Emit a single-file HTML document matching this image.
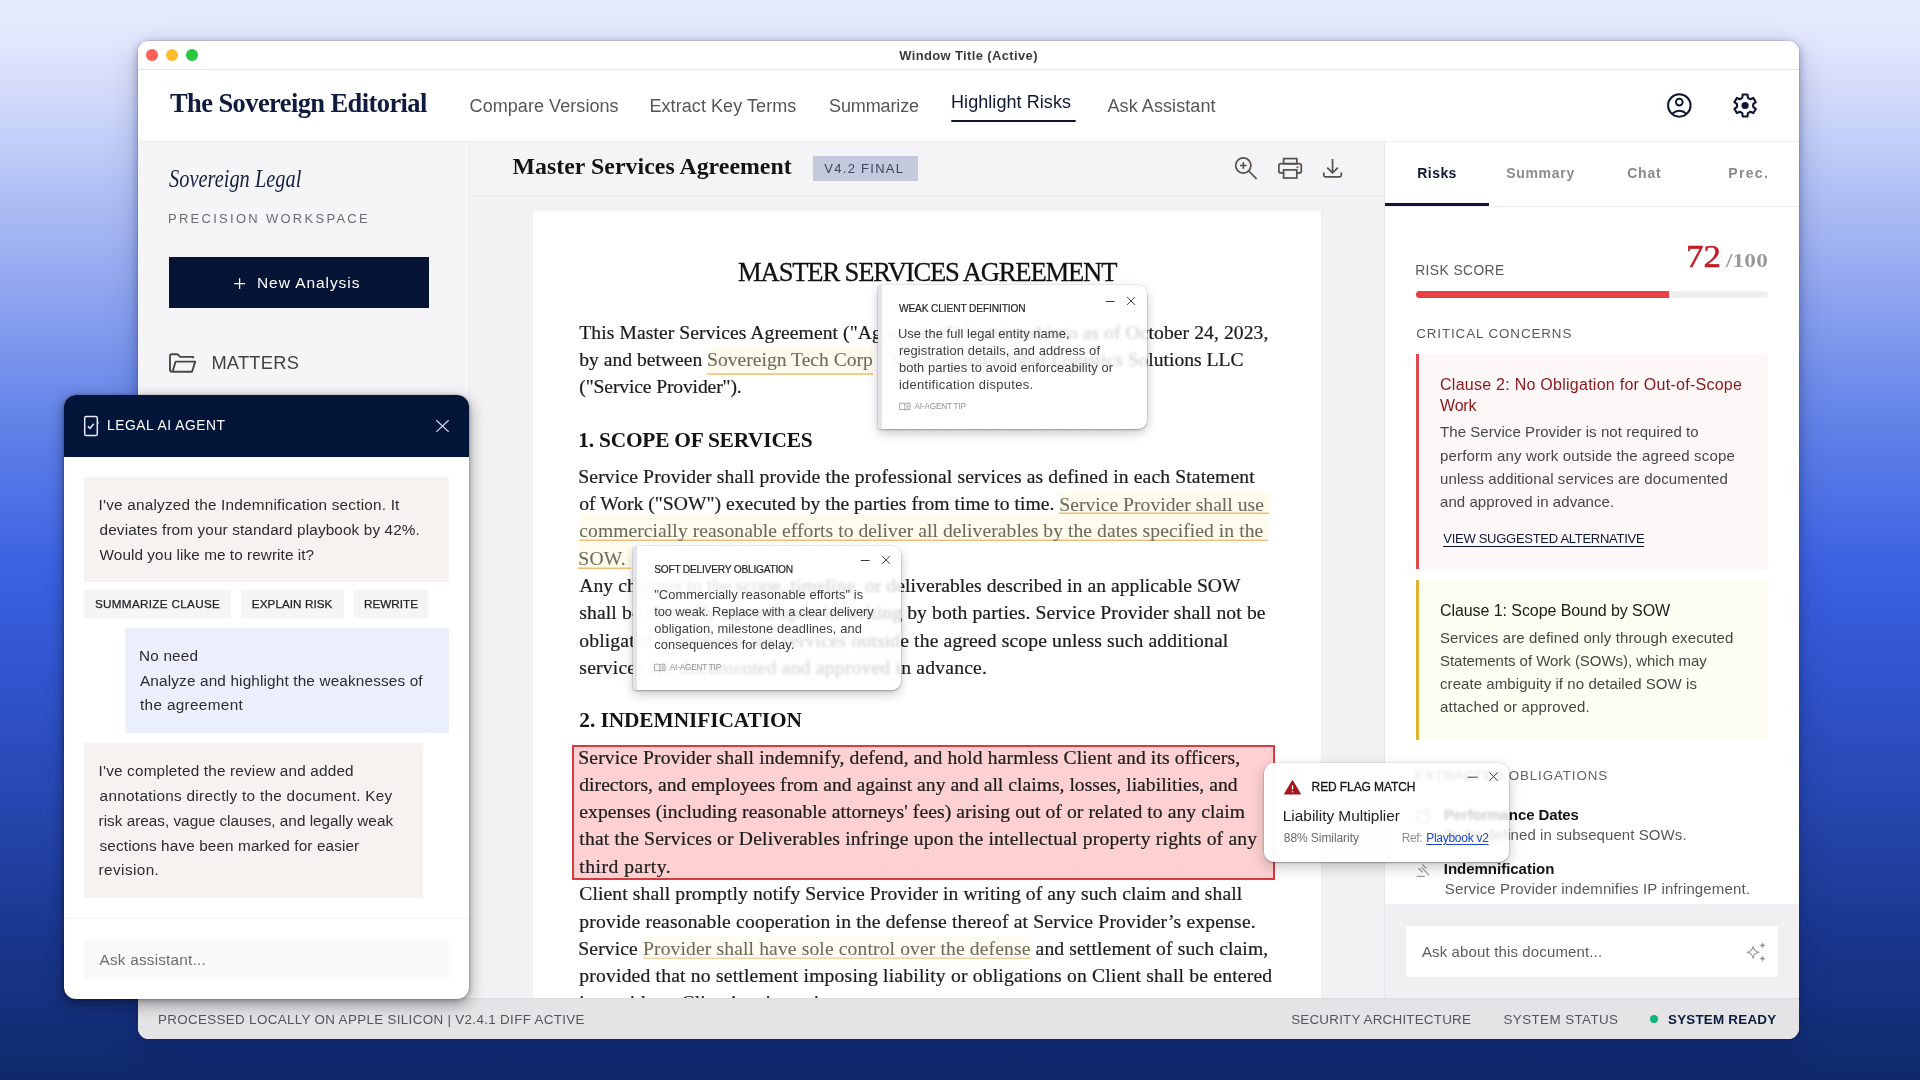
<!DOCTYPE html>
<html lang="en"><head><meta charset="utf-8"><title>The Sovereign Editorial</title>
<style>
*{box-sizing:border-box;margin:0;padding:0}
html,body{width:1920px;height:1080px;overflow:hidden}
body{position:relative;font-family:"Liberation Sans",sans-serif;
 background:linear-gradient(180deg,#e7ebfd 0%,#e1e6fc 4%,#d2dafa 9%,#bccaf7 14.5%,#93a8f0 26%,#6283e8 39%,#3d63e3 52%,#3155cf 62%,#2646ae 75%,#18358a 88%,#10296b 100%);}
a{color:inherit}
#root{position:absolute;left:0;top:0;width:1920px;height:1080px;will-change:transform;transform:translateZ(0)}

</style></head>
<body>
<div id="root">
<!-- p_frame -->
<div style="position:absolute;left:138px;top:41px;width:1661px;height:998px;background:#fff;border-radius:11px;box-shadow:0 0 0 .5px rgba(30,40,100,.20),0 3px 11px rgba(25,35,95,.42),0 12px 34px rgba(10,20,70,.16);"></div>
<div style="position:absolute;left:138px;top:41px;width:1661px;height:29px;background:#fff;border-radius:11px 11px 0 0;border-bottom:1px solid #e2e2e6;"></div>
<div style="position:absolute;left:146px;top:49px;width:12px;height:12px;background:#ff5f57;border-radius:50%;"></div>
<div style="position:absolute;left:166px;top:49px;width:12px;height:12px;background:#febc2e;border-radius:50%;"></div>
<div style="position:absolute;left:186px;top:49px;width:12px;height:12px;background:#28c840;border-radius:50%;"></div>
<div style="position:absolute;left:568.5px;width:800px;text-align:center;top:46.90px;font-family:'Liberation Sans', sans-serif;font-size:13px;font-weight:700;color:#3c3c40;line-height:18px;white-space:nowrap;"><span style="letter-spacing:0.362px;margin-left:0.00px;display:inline-block;">Window Title (Active)</span></div>
<div style="position:absolute;left:138px;top:70px;width:1661px;height:71px;background:#fff;"></div>
<div style="letter-spacing:-0.593px;margin-left:0.00px;position:absolute;left:170px;top:85.16px;font-family:'Liberation Serif', serif;font-size:26.5px;font-weight:700;color:#101c3e;line-height:37px;white-space:nowrap;">The Sovereign Editorial</div>
<div style="letter-spacing:0.062px;margin-left:0.00px;position:absolute;left:469.6px;top:94.26px;font-family:'Liberation Sans', sans-serif;font-size:18px;font-weight:400;color:#55555a;line-height:25px;white-space:nowrap;">Compare Versions</div>
<div style="letter-spacing:0.079px;margin-left:-1.00px;position:absolute;left:650.4px;top:94.26px;font-family:'Liberation Sans', sans-serif;font-size:18px;font-weight:400;color:#55555a;line-height:25px;white-space:nowrap;">Extract Key Terms</div>
<div style="letter-spacing:-0.126px;margin-left:0.00px;position:absolute;left:829px;top:94.26px;font-family:'Liberation Sans', sans-serif;font-size:18px;font-weight:400;color:#55555a;line-height:25px;white-space:nowrap;">Summarize</div>
<div style="letter-spacing:0.069px;margin-left:-1.00px;position:absolute;left:952px;top:90.06px;font-family:'Liberation Sans', sans-serif;font-size:18px;font-weight:400;color:#0c1733;line-height:25px;white-space:nowrap;">Highlight Risks</div>
<div style="position:absolute;left:951px;top:119.7px;width:125px;height:2.7px;background:#0c1733;border-radius:1.4px;"></div>
<div style="letter-spacing:0.080px;margin-left:0.00px;position:absolute;left:1107.5px;top:94.26px;font-family:'Liberation Sans', sans-serif;font-size:18px;font-weight:400;color:#55555a;line-height:25px;white-space:nowrap;">Ask Assistant</div>
<svg style="position:absolute;left:1667px;top:93px;overflow:visible;" width="25" height="25" viewBox="0 0 25 25" fill="none"><circle cx="12.3" cy="12.4" r="11.25" stroke="#0d1734" stroke-width="2"/><circle cx="12.3" cy="9.1" r="3.35" stroke="#0d1734" stroke-width="1.9"/><path d="M5.0 20.7 Q12.3 14.7 19.6 20.7" stroke="#0d1734" stroke-width="1.9"/></svg>
<svg style="position:absolute;left:1733px;top:93px;overflow:visible;" width="25" height="25" viewBox="0 0 25 25" fill="none"><path d="M9.30 4.79 L9.68 1.57 L14.52 1.57 L14.90 4.79 L17.37 6.22 L20.36 4.93 L22.78 9.13 L20.18 11.08 L20.18 13.92 L22.78 15.87 L20.36 20.07 L17.37 18.78 L14.90 20.21 L14.52 23.43 L9.68 23.43 L9.30 20.21 L6.83 18.78 L3.84 20.07 L1.42 15.87 L4.02 13.92 L4.02 11.08 L1.42 9.13 L3.84 4.93 L6.83 6.22Z" stroke="#0d1734" stroke-width="2.1" stroke-linejoin="round"/><circle cx="12.1" cy="12.5" r="3.6" fill="#0d1734"/></svg>
<!-- p_sidebar -->
<div style="position:absolute;left:138px;top:141px;width:331px;height:857px;background:#f5f5f8;border-top:1px solid #efeff3;"></div>
<div style="position:absolute;left:168.6px;top:161.26px;font-family:'Liberation Serif', serif;font-size:25px;font-weight:400;color:#13203f;line-height:35px;white-space:nowrap;font-style:italic;transform:scaleX(.816);transform-origin:0 0;">Sovereign Legal</div>
<div style="letter-spacing:2.278px;margin-left:-1.00px;position:absolute;left:169px;top:209.70px;font-family:'Liberation Sans', sans-serif;font-size:13px;font-weight:400;color:#6c6c70;line-height:18px;white-space:nowrap;">PRECISION WORKSPACE</div>
<div style="position:absolute;left:169px;top:256.8px;width:260px;height:51.5px;background:#061536;"></div>
<svg style="position:absolute;left:233px;top:277px;overflow:visible;" width="13" height="13" viewBox="0 0 13 13" fill="none"><path d="M6.6 1.2 V12 M1.2 6.6 H12" stroke="#fff" stroke-width="1.3"/></svg>
<div style="letter-spacing:0.929px;margin-left:-1.00px;position:absolute;left:258px;top:271.63px;font-family:'Liberation Sans', sans-serif;font-size:15.5px;font-weight:400;color:#fff;line-height:22px;white-space:nowrap;">New Analysis</div>
<svg style="position:absolute;left:168px;top:352px;overflow:visible;" width="29" height="22" viewBox="0 0 29 22" fill="none"><path d="M4.6 19.6 H3.6 Q2 19.6 2 18 V4 Q2 2.3 3.7 2.3 H9.4 L12.2 4.9 H25.3 V6.2" stroke="#4a4643" stroke-width="1.9" stroke-linejoin="round" stroke-linecap="butt"/><path d="M7.6 9.6 H27.2 L24.0 19.7 H4.5 Z" stroke="#4a4643" stroke-width="1.9" stroke-linejoin="round"/></svg>
<div style="letter-spacing:0.251px;margin-left:-1.00px;position:absolute;left:212.4px;top:350.06px;font-family:'Liberation Sans', sans-serif;font-size:18.3px;font-weight:400;color:#45413e;line-height:26px;white-space:nowrap;">MATTERS</div>
<!-- p_doc -->
<div style="position:absolute;left:469px;top:141px;width:916px;height:857px;background:#f2f2f5;border-left:1px solid #ececf0;"></div>
<div style="position:absolute;left:470px;top:141px;width:915px;height:54.5px;background:#f4f4f6;border-bottom:1px solid #e9e9ed;border-top:1px solid #efeff3;"></div>
<div style="letter-spacing:0.051px;margin-left:0.00px;position:absolute;left:512.5px;top:149.87px;font-family:'Liberation Serif', serif;font-size:23.8px;font-weight:700;color:#141414;line-height:33px;white-space:nowrap;">Master Services Agreement</div>
<div style="position:absolute;left:813px;top:156px;width:105px;height:25px;background:#c5c9dd;"></div>
<div style="letter-spacing:1.282px;margin-left:0.00px;position:absolute;left:824.3px;top:159.60px;font-family:'Liberation Sans', sans-serif;font-size:13px;font-weight:400;color:#3b4560;line-height:18px;white-space:nowrap;">V4.2 FINAL</div>
<svg style="position:absolute;left:1234px;top:156px;overflow:visible;" width="24" height="24" viewBox="0 0 24 24" fill="none"><circle cx="9.3" cy="9.5" r="7.6" stroke="#55504e" stroke-width="1.7"/><path d="M9.3 6.2 V12.8 M6.0 9.5 H12.6" stroke="#55504e" stroke-width="1.7"/><path d="M14.8 15.0 L22.6 22.8" stroke="#55504e" stroke-width="1.7" stroke-linecap="butt"/></svg>
<svg style="position:absolute;left:1277px;top:156px;overflow:visible;" width="26" height="24" viewBox="0 0 26 24" fill="none"><rect x="6.6" y="2.6" width="13.2" height="5.2" stroke="#55504e" stroke-width="1.7"/><path d="M6.6 16.9 H3.9 Q1.9 16.9 1.9 14.9 V9.9 Q1.9 7.7 4.1 7.7 H22.1 Q24.3 7.7 24.3 9.9 V14.9 Q24.3 16.9 22.3 16.9 H19.8" stroke="#55504e" stroke-width="1.7"/><rect x="6.6" y="13.9" width="13.2" height="8.1" stroke="#55504e" stroke-width="1.7"/><circle cx="20.5" cy="11.3" r="1.05" fill="#55504e"/></svg>
<svg style="position:absolute;left:1322px;top:157px;overflow:visible;" width="22" height="22" viewBox="0 0 22 22" fill="none"><path d="M10.55 1.9 V15.2 M5.2 10.6 L10.55 15.9 L15.9 10.6" stroke="#55504e" stroke-width="1.7"/><path d="M1.8 15.6 V18.3 Q1.8 19.8 3.3 19.8 H17.8 Q19.3 19.8 19.3 18.3 V15.6" stroke="#55504e" stroke-width="1.7"/></svg>
<div style="position:absolute;left:532.5px;top:211px;width:788.5px;height:800px;background:#fff;box-shadow:0 0 2px rgba(0,0,0,.04);"></div>
<div style="position:absolute;left:527.2px;width:800px;text-align:center;top:254.22px;font-family:'Liberation Serif', serif;font-size:26.6px;font-weight:400;color:#111;line-height:37px;white-space:nowrap;-webkit-text-stroke:.3px #111;"><span style="letter-spacing:-1.161px;margin-left:0.00px;display:inline-block;">MASTER SERVICES AGREEMENT</span></div>
<div style="letter-spacing:0.085px;margin-left:0.00px;position:absolute;left:579.3px;top:319.08px;font-family:'Liberation Serif', serif;font-size:19.6px;font-weight:400;color:#1c1c1c;line-height:27px;white-space:nowrap;-webkit-text-stroke:.22px currentColor;">This Master Services Agreement ("Agreement") is entered into as of October 24, 2023,</div>
<div style="letter-spacing:-0.004px;margin-left:0.00px;position:absolute;left:579.3px;top:346.28px;font-family:'Liberation Serif', serif;font-size:19.6px;font-weight:400;color:#1c1c1c;line-height:27px;white-space:nowrap;-webkit-text-stroke:.22px currentColor;">by and between <span style="background:#fefbee;box-shadow:inset 0 -2px 0 #f5ca8c;padding:1px 0 5px;color:#6c6c5a;-webkit-text-stroke:.08px #6c6c5a">Sovereign Tech Corp</span> ("Client") and Global Logistics Solutions LLC</div>
<div style="letter-spacing:-0.134px;margin-left:0.00px;position:absolute;left:579.3px;top:373.48px;font-family:'Liberation Serif', serif;font-size:19.6px;font-weight:400;color:#1c1c1c;line-height:27px;white-space:nowrap;-webkit-text-stroke:.22px currentColor;">("Service Provider").</div>
<div style="letter-spacing:-0.224px;margin-left:-1.00px;position:absolute;left:579.3px;top:425.08px;font-family:'Liberation Serif', serif;font-size:21.4px;font-weight:700;color:#141414;line-height:30px;white-space:nowrap;">1. SCOPE OF SERVICES</div>
<div style="letter-spacing:0.144px;margin-left:-1.00px;position:absolute;left:579.3px;top:462.88px;font-family:'Liberation Serif', serif;font-size:19.6px;font-weight:400;color:#1c1c1c;line-height:27px;white-space:nowrap;-webkit-text-stroke:.22px currentColor;">Service Provider shall provide the professional services as defined in each Statement</div>
<div style="letter-spacing:0.021px;margin-left:0.00px;position:absolute;left:579.3px;top:490.18px;font-family:'Liberation Serif', serif;font-size:19.6px;font-weight:400;color:#1c1c1c;line-height:27px;white-space:nowrap;-webkit-text-stroke:.22px currentColor;">of Work ("SOW") executed by the parties from time to time. <span style="background:#fffcee;box-shadow:inset 0 -1.6px 0 #f1c078;padding:2.5px 0 0;color:#6c6c5a;-webkit-text-stroke:.08px #6c6c5a">Service Provider shall use&nbsp;</span></div>
<div style="letter-spacing:0.060px;margin-left:0.00px;position:absolute;left:579.3px;top:517.49px;font-family:'Liberation Serif', serif;font-size:19.6px;font-weight:400;color:#1c1c1c;line-height:27px;white-space:nowrap;-webkit-text-stroke:.22px currentColor;"><span style="background:#fffcee;box-shadow:inset 0 -1.6px 0 #f1c078;padding:6px 0 0;color:#6c6c5a;-webkit-text-stroke:.08px #6c6c5a">commercially reasonable efforts to deliver all deliverables by the dates specified in the&nbsp;</span></div>
<div style="letter-spacing:0.220px;margin-left:-1.00px;position:absolute;left:579.3px;top:544.68px;font-family:'Liberation Serif', serif;font-size:19.6px;font-weight:400;color:#1c1c1c;line-height:27px;white-space:nowrap;-webkit-text-stroke:.22px currentColor;"><span style="background:#fffcee;box-shadow:inset 0 -1.6px 0 #f1c078;padding:6px 0 0;color:#6c6c5a;-webkit-text-stroke:.08px #6c6c5a">SOW.&nbsp;</span></div>
<div style="letter-spacing:0.049px;margin-left:0.00px;position:absolute;left:579.3px;top:571.99px;font-family:'Liberation Serif', serif;font-size:19.6px;font-weight:400;color:#1c1c1c;line-height:27px;white-space:nowrap;-webkit-text-stroke:.22px currentColor;">Any changes to the scope, timeline, or deliverables described in an applicable SOW</div>
<div style="letter-spacing:0.127px;margin-left:0.00px;position:absolute;left:579.3px;top:599.28px;font-family:'Liberation Serif', serif;font-size:19.6px;font-weight:400;color:#1c1c1c;line-height:27px;white-space:nowrap;-webkit-text-stroke:.22px currentColor;">shall be mutually agreed upon in writing by both parties. Service Provider shall not be</div>
<div style="letter-spacing:0.147px;margin-left:0.00px;position:absolute;left:579.3px;top:626.58px;font-family:'Liberation Serif', serif;font-size:19.6px;font-weight:400;color:#1c1c1c;line-height:27px;white-space:nowrap;-webkit-text-stroke:.22px currentColor;">obligated to perform any services outside the agreed scope unless such additional</div>
<div style="letter-spacing:0.211px;margin-left:0.00px;position:absolute;left:579.3px;top:653.88px;font-family:'Liberation Serif', serif;font-size:19.6px;font-weight:400;color:#1c1c1c;line-height:27px;white-space:nowrap;-webkit-text-stroke:.22px currentColor;">services are documented and approved in advance.</div>
<div style="letter-spacing:-0.092px;margin-left:0.00px;position:absolute;left:579.3px;top:704.58px;font-family:'Liberation Serif', serif;font-size:21.4px;font-weight:700;color:#141414;line-height:30px;white-space:nowrap;">2. INDEMNIFICATION</div>
<div style="position:absolute;left:571.5px;top:744.5px;width:703.5px;height:135px;background:#fdd0d2;border:2px solid #d93a40;"></div>
<div style="letter-spacing:0.127px;margin-left:-1.00px;position:absolute;left:579.3px;top:743.58px;font-family:'Liberation Serif', serif;font-size:19.6px;font-weight:400;color:#1c1c1c;line-height:27px;white-space:nowrap;-webkit-text-stroke:.22px currentColor;">Service Provider shall indemnify, defend, and hold harmless Client and its officers,</div>
<div style="letter-spacing:0.024px;margin-left:0.00px;position:absolute;left:579.3px;top:770.88px;font-family:'Liberation Serif', serif;font-size:19.6px;font-weight:400;color:#1c1c1c;line-height:27px;white-space:nowrap;-webkit-text-stroke:.22px currentColor;">directors, and employees from and against any and all claims, losses, liabilities, and</div>
<div style="letter-spacing:0.084px;margin-left:0.00px;position:absolute;left:579.3px;top:798.08px;font-family:'Liberation Serif', serif;font-size:19.6px;font-weight:400;color:#1c1c1c;line-height:27px;white-space:nowrap;-webkit-text-stroke:.22px currentColor;">expenses (including reasonable attorneys' fees) arising out of or related to any claim</div>
<div style="letter-spacing:0.188px;margin-left:0.00px;position:absolute;left:579.3px;top:825.28px;font-family:'Liberation Serif', serif;font-size:19.6px;font-weight:400;color:#1c1c1c;line-height:27px;white-space:nowrap;-webkit-text-stroke:.22px currentColor;">that the Services or Deliverables infringe upon the intellectual property rights of any</div>
<div style="letter-spacing:0.510px;margin-left:0.00px;position:absolute;left:579.3px;top:852.58px;font-family:'Liberation Serif', serif;font-size:19.6px;font-weight:400;color:#1c1c1c;line-height:27px;white-space:nowrap;-webkit-text-stroke:.22px currentColor;">third party.</div>
<div style="letter-spacing:0.100px;margin-left:0.00px;position:absolute;left:579.3px;top:880.28px;font-family:'Liberation Serif', serif;font-size:19.6px;font-weight:400;color:#1c1c1c;line-height:27px;white-space:nowrap;-webkit-text-stroke:.22px currentColor;">Client shall promptly notify Service Provider in writing of any such claim and shall</div>
<div style="letter-spacing:0.176px;margin-left:0.00px;position:absolute;left:579.3px;top:907.58px;font-family:'Liberation Serif', serif;font-size:19.6px;font-weight:400;color:#1c1c1c;line-height:27px;white-space:nowrap;-webkit-text-stroke:.22px currentColor;">provide reasonable cooperation in the defense thereof at Service Provider’s expense.</div>
<div style="letter-spacing:0.126px;margin-left:-1.00px;position:absolute;left:579.3px;top:934.78px;font-family:'Liberation Serif', serif;font-size:19.6px;font-weight:400;color:#1c1c1c;line-height:27px;white-space:nowrap;-webkit-text-stroke:.22px currentColor;">Service <span style="background:#fffdf3;box-shadow:inset 0 -1.6px 0 #f0d6a2;padding:2px 0 0;color:#6c6c5a;-webkit-text-stroke:.08px #6c6c5a">Provider shall have sole control over the defense</span> and settlement of such claim,</div>
<div style="letter-spacing:0.195px;margin-left:0.00px;position:absolute;left:579.3px;top:962.08px;font-family:'Liberation Serif', serif;font-size:19.6px;font-weight:400;color:#1c1c1c;line-height:27px;white-space:nowrap;-webkit-text-stroke:.22px currentColor;">provided that no settlement imposing liability or obligations on Client shall be entered</div>
<div style="letter-spacing:0.157px;margin-left:0.00px;position:absolute;left:579.3px;top:989.38px;font-family:'Liberation Serif', serif;font-size:19.6px;font-weight:400;color:#1c1c1c;line-height:27px;white-space:nowrap;-webkit-text-stroke:.22px currentColor;">into without Client’s prior written consent.</div>
<!-- p_right -->
<div style="position:absolute;left:1384px;top:141px;width:415px;height:857px;background:#fff;border-left:1px solid #e8e8ec;border-top:1px solid #efeff3;"></div>
<div style="position:absolute;left:1385px;top:205.5px;width:414px;height:1px;background:#ebebef;"></div>
<div style="letter-spacing:0.432px;margin-left:0.00px;position:absolute;left:1417.3px;top:162.65px;font-family:'Liberation Sans', sans-serif;font-size:14px;font-weight:700;color:#0c1733;line-height:20px;white-space:nowrap;">Risks</div>
<div style="letter-spacing:0.697px;margin-left:0.00px;position:absolute;left:1506.2px;top:163.25px;font-family:'Liberation Sans', sans-serif;font-size:14px;font-weight:700;color:#8a8a8e;line-height:20px;white-space:nowrap;">Summary</div>
<div style="letter-spacing:0.784px;margin-left:0.00px;position:absolute;left:1627.2px;top:163.25px;font-family:'Liberation Sans', sans-serif;font-size:14px;font-weight:700;color:#8a8a8e;line-height:20px;white-space:nowrap;">Chat</div>
<div style="letter-spacing:1.310px;margin-left:0.00px;position:absolute;left:1728.3px;top:163.25px;font-family:'Liberation Sans', sans-serif;font-size:14px;font-weight:700;color:#8a8a8e;line-height:20px;white-space:nowrap;">Prec.</div>
<div style="position:absolute;left:1385px;top:203.2px;width:103.7px;height:3px;background:#0c1733;"></div>
<div style="letter-spacing:0.434px;margin-left:-1.00px;position:absolute;left:1416.2px;top:260.92px;font-family:'Liberation Sans', sans-serif;font-size:13.8px;font-weight:400;color:#58585c;line-height:19px;white-space:nowrap;">RISK SCORE</div>
<div style="position:absolute;left:1686.2px;top:234.20px;font-family:'Liberation Serif', serif;font-size:32px;font-weight:400;color:#c11f25;line-height:45px;white-space:nowrap;-webkit-text-stroke:.55px #c11f25;transform:scaleX(1.09);transform-origin:0 0;">72</div>
<div style="position:absolute;left:1725.6px;top:247.38px;font-family:'Liberation Serif', serif;font-size:19.6px;font-weight:700;color:#9a9a9a;line-height:27px;white-space:nowrap;transform:scaleX(1.19);transform-origin:0 0;letter-spacing:.1px;">/100</div>
<div style="position:absolute;left:1416px;top:290.7px;width:352px;height:7.6px;background:#efefef;border-radius:4px;"></div>
<div style="position:absolute;left:1416px;top:290.7px;width:253.4px;height:7.6px;background:#e93f45;border-radius:4px 0 0 4px;"></div>
<div style="letter-spacing:0.892px;margin-left:0.00px;position:absolute;left:1416.2px;top:324.46px;font-family:'Liberation Sans', sans-serif;font-size:13.4px;font-weight:400;color:#58585c;line-height:19px;white-space:nowrap;">CRITICAL CONCERNS</div>
<div style="position:absolute;left:1416px;top:353.8px;width:352px;height:215.2px;background:#fef7f7;border-left:3px solid #dc4a4e;"></div>
<div style="letter-spacing:0.261px;margin-left:0.00px;position:absolute;left:1440px;top:374.26px;font-family:'Liberation Sans', sans-serif;font-size:16px;font-weight:400;color:#89171a;line-height:22px;white-space:nowrap;">Clause 2: No Obligation for Out-of-Scope</div>
<div style="letter-spacing:-0.180px;margin-left:0.00px;position:absolute;left:1440px;top:394.76px;font-family:'Liberation Sans', sans-serif;font-size:16px;font-weight:400;color:#89171a;line-height:22px;white-space:nowrap;">Work</div>
<div style="letter-spacing:0.071px;margin-left:0.00px;position:absolute;left:1440px;top:421.40px;font-family:'Liberation Sans', sans-serif;font-size:15px;font-weight:400;color:#464648;line-height:21px;white-space:nowrap;">The Service Provider is not required to</div>
<div style="letter-spacing:0.156px;margin-left:0.00px;position:absolute;left:1440px;top:444.70px;font-family:'Liberation Sans', sans-serif;font-size:15px;font-weight:400;color:#464648;line-height:21px;white-space:nowrap;">perform any work outside the agreed scope</div>
<div style="letter-spacing:0.109px;margin-left:0.00px;position:absolute;left:1440px;top:468.10px;font-family:'Liberation Sans', sans-serif;font-size:15px;font-weight:400;color:#464648;line-height:21px;white-space:nowrap;">unless additional services are documented</div>
<div style="letter-spacing:0.067px;margin-left:0.00px;position:absolute;left:1440px;top:491.40px;font-family:'Liberation Sans', sans-serif;font-size:15px;font-weight:400;color:#464648;line-height:21px;white-space:nowrap;">and approved in advance.</div>
<div style="letter-spacing:-0.281px;margin-left:0.00px;position:absolute;left:1443.3px;top:529.90px;font-family:'Liberation Sans', sans-serif;font-size:13px;font-weight:400;color:#0c1733;line-height:18px;white-space:nowrap;border-bottom:1px solid #0c1733;height:15.6px;line-height:15px;margin-top:1.6px;">VIEW SUGGESTED ALTERNATIVE</div>
<div style="position:absolute;left:1416px;top:580px;width:352px;height:159.8px;background:#fefdf1;border-left:3px solid #e2b22e;"></div>
<div style="letter-spacing:-0.075px;margin-left:0.00px;position:absolute;left:1440px;top:599.86px;font-family:'Liberation Sans', sans-serif;font-size:16px;font-weight:400;color:#1b1b1b;line-height:22px;white-space:nowrap;">Clause 1: Scope Bound by SOW</div>
<div style="letter-spacing:0.118px;margin-left:0.00px;position:absolute;left:1440px;top:626.50px;font-family:'Liberation Sans', sans-serif;font-size:15px;font-weight:400;color:#464648;line-height:21px;white-space:nowrap;">Services are defined only through executed</div>
<div style="letter-spacing:-0.038px;margin-left:0.00px;position:absolute;left:1440px;top:649.90px;font-family:'Liberation Sans', sans-serif;font-size:15px;font-weight:400;color:#464648;line-height:21px;white-space:nowrap;">Statements of Work (SOWs), which may</div>
<div style="letter-spacing:0.073px;margin-left:0.00px;position:absolute;left:1440px;top:673.20px;font-family:'Liberation Sans', sans-serif;font-size:15px;font-weight:400;color:#464648;line-height:21px;white-space:nowrap;">create ambiguity if no detailed SOW is</div>
<div style="letter-spacing:0.187px;margin-left:0.00px;position:absolute;left:1440px;top:696.20px;font-family:'Liberation Sans', sans-serif;font-size:15px;font-weight:400;color:#464648;line-height:21px;white-space:nowrap;">attached or approved.</div>
<div style="letter-spacing:0.867px;margin-left:-1.00px;position:absolute;left:1416.2px;top:765.96px;font-family:'Liberation Sans', sans-serif;font-size:13.4px;font-weight:400;color:#636367;line-height:19px;white-space:nowrap;">EXTRACTED OBLIGATIONS</div>
<svg style="position:absolute;left:1416px;top:808px;overflow:visible;" width="15" height="16" viewBox="0 0 15 16" fill="none"><rect x="1.5" y="2.5" width="12" height="12" rx="1.5" stroke="#9a9a9e" stroke-width="1.2"/><path d="M1.5 6 H13.5 M4.5 1 V4 M10.5 1 V4" stroke="#9a9a9e" stroke-width="1.2"/></svg>
<div style="letter-spacing:-0.099px;margin-left:-1.00px;position:absolute;left:1444.8px;top:803.70px;font-family:'Liberation Sans', sans-serif;font-size:15px;font-weight:700;color:#141414;line-height:21px;white-space:nowrap;">Performance Dates</div>
<div style="letter-spacing:0.077px;margin-left:0.00px;position:absolute;left:1444.8px;top:824.10px;font-family:'Liberation Sans', sans-serif;font-size:15px;font-weight:400;color:#58585c;line-height:21px;white-space:nowrap;">To be defined in subsequent SOWs.</div>
<svg style="position:absolute;left:1415.5px;top:862.5px;overflow:visible;" width="15" height="15" viewBox="0 0 15 15" fill="none"><path d="M6.2 1.4 L10.4 5.6 M2.4 5.2 L6.6 9.4 M5.4 4.4 L13.4 12.4 M0.8 13.4 H8.8" stroke="#9a9a9e" stroke-width="1.25"/></svg>
<div style="letter-spacing:-0.020px;margin-left:-1.00px;position:absolute;left:1444.8px;top:857.60px;font-family:'Liberation Sans', sans-serif;font-size:15px;font-weight:700;color:#141414;line-height:21px;white-space:nowrap;">Indemnification</div>
<div style="letter-spacing:0.138px;margin-left:0.00px;position:absolute;left:1444.8px;top:877.60px;font-family:'Liberation Sans', sans-serif;font-size:15px;font-weight:400;color:#58585c;line-height:21px;white-space:nowrap;">Service Provider indemnifies IP infringement.</div>
<div style="position:absolute;left:1385px;top:904px;width:414px;height:94px;background:#f0f0f3;"></div>
<div style="position:absolute;left:1406px;top:926.2px;width:372px;height:50.8px;background:#fff;"></div>
<div style="letter-spacing:0.136px;margin-left:0.00px;position:absolute;left:1421.9px;top:941.30px;font-family:'Liberation Sans', sans-serif;font-size:15px;font-weight:400;color:#5c5c62;line-height:21px;white-space:nowrap;">Ask about this document...</div>
<svg style="position:absolute;left:1746px;top:941px;overflow:visible;" width="22" height="22" viewBox="0 0 22 22" fill="none"><path d="M7.1 5.3 Q8.0 10.4 13.1 11.3 Q8.0 12.2 7.1 17.3 Q6.2 12.2 1.1 11.3 Q6.2 10.4 7.1 5.3Z" stroke="#9a9a9e" stroke-width="1.1" stroke-linejoin="round"/><path d="M16.5 1.7 Q16.9 4.0 19.2 4.4 Q16.9 4.8 16.5 7.1 Q16.1 4.8 13.8 4.4 Q16.1 4.0 16.5 1.7Z" fill="#9a9a9e" stroke="#9a9a9e" stroke-width=".4"/><path d="M16.5 15.0 Q16.9 17.3 19.2 17.7 Q16.9 18.1 16.5 20.4 Q16.1 18.1 13.8 17.7 Q16.1 17.3 16.5 15.0Z" fill="#9a9a9e" stroke="#9a9a9e" stroke-width=".4"/></svg>
<!-- p_status -->
<div style="position:absolute;left:138px;top:998px;width:1661px;height:41px;background:#e4e4e7;border-radius:0 0 11px 11px;border-top:1px solid #dcdce0;"></div>
<div style="letter-spacing:0.332px;margin-left:-1.00px;position:absolute;left:159px;top:1009.56px;font-family:'Liberation Sans', sans-serif;font-size:13.4px;font-weight:400;color:#55555a;line-height:19px;white-space:nowrap;">PROCESSED LOCALLY ON APPLE SILICON | V2.4.1 DIFF ACTIVE</div>
<div style="letter-spacing:0.216px;margin-left:0.00px;position:absolute;left:1291.2px;top:1009.56px;font-family:'Liberation Sans', sans-serif;font-size:13.4px;font-weight:400;color:#55555a;line-height:19px;white-space:nowrap;">SECURITY ARCHITECTURE</div>
<div style="letter-spacing:0.410px;margin-left:0.00px;position:absolute;left:1503.5px;top:1009.56px;font-family:'Liberation Sans', sans-serif;font-size:13.4px;font-weight:400;color:#55555a;line-height:19px;white-space:nowrap;">SYSTEM STATUS</div>
<div style="position:absolute;left:1649.9px;top:1015.3px;width:8px;height:8px;background:#12b37f;border-radius:50%;"></div>
<div style="letter-spacing:0.225px;margin-left:0.00px;position:absolute;left:1668px;top:1009.56px;font-family:'Liberation Sans', sans-serif;font-size:13.4px;font-weight:700;color:#0c1a3e;line-height:19px;white-space:nowrap;">SYSTEM READY</div>
<!-- p_popups -->
<div style="position:absolute;left:877.5px;top:284.7px;width:269.6px;height:144.3px;background:linear-gradient(90deg,rgba(255,255,255,.97) 0%,rgba(255,255,255,.87) 22%,rgba(255,255,255,.81) 55%,rgba(255,255,255,.79) 100%);border-left:4px solid #e3e3e9;border-radius:3px 9px 9px 3px;-webkit-backdrop-filter:blur(1.7px);backdrop-filter:blur(1.7px);box-shadow:0 0 0 .5px rgba(0,0,0,.10),0 1px 2px rgba(0,0,0,.25),0 4px 11px rgba(0,0,0,.22);"></div>
<div style="letter-spacing:-0.127px;margin-left:0.00px;position:absolute;left:898.9px;top:302.07px;font-family:'Liberation Sans', sans-serif;font-size:10.2px;font-weight:400;color:#26262a;line-height:14px;white-space:nowrap;-webkit-text-stroke:.2px #26262a;">WEAK CLIENT DEFINITION</div>
<svg style="position:absolute;left:1103.5px;top:294.9px;overflow:visible;" width="36" height="14" viewBox="0 0 36 14" fill="none"><path d="M1.8 6.5 H10.6" stroke="#3a3a3e" stroke-width="1"/><path d="M23.0 1.9 L31.0 9.9 M31.0 1.9 L23.0 9.9" stroke="#3a3a3e" stroke-width="1"/></svg>
<div style="letter-spacing:0.083px;margin-left:-1.00px;position:absolute;left:898.9px;top:325.03px;font-family:'Liberation Sans', sans-serif;font-size:12.9px;font-weight:400;color:#3c3c42;line-height:18px;white-space:nowrap;">Use the full legal entity name,</div>
<div style="letter-spacing:0.115px;margin-left:0.00px;position:absolute;left:898.9px;top:341.88px;font-family:'Liberation Sans', sans-serif;font-size:12.9px;font-weight:400;color:#3c3c42;line-height:18px;white-space:nowrap;">registration details, and address of</div>
<div style="letter-spacing:0.093px;margin-left:0.00px;position:absolute;left:898.9px;top:358.73px;font-family:'Liberation Sans', sans-serif;font-size:12.9px;font-weight:400;color:#3c3c42;line-height:18px;white-space:nowrap;">both parties to avoid enforceability or</div>
<div style="letter-spacing:0.315px;margin-left:0.00px;position:absolute;left:898.9px;top:375.58px;font-family:'Liberation Sans', sans-serif;font-size:12.9px;font-weight:400;color:#3c3c42;line-height:18px;white-space:nowrap;">identification disputes.</div>
<svg style="position:absolute;left:898.7px;top:402.1px;overflow:visible;" width="12" height="9" viewBox="0 0 12 9" fill="none"><path d="M5.8 1.6 V8.0 M.6 1.2 H4.3 Q5.8 1.2 5.8 2.2 Q5.8 1.2 7.3 1.2 H11 V7.6 H7.3 Q5.8 7.6 5.8 8.3 Q5.8 7.6 4.3 7.6 H.6Z M7.6 3.1 H9.6 M7.6 4.6 H9.6 M7.6 6.1 H9.6" stroke="#909096" stroke-width=".8"/></svg>
<div style="letter-spacing:-0.183px;margin-left:0.00px;position:absolute;left:914.5px;top:401.46px;font-family:'Liberation Sans', sans-serif;font-size:8.2px;font-weight:400;color:#909096;line-height:11px;white-space:nowrap;">AI-AGENT TIP</div>
<div style="position:absolute;left:632.8px;top:545.6px;width:268.2px;height:144.7px;background:linear-gradient(90deg,rgba(255,255,255,.97) 0%,rgba(255,255,255,.87) 22%,rgba(255,255,255,.81) 55%,rgba(255,255,255,.79) 100%);border-left:4px solid #e3e3e9;border-radius:3px 9px 9px 3px;-webkit-backdrop-filter:blur(1.7px);backdrop-filter:blur(1.7px);box-shadow:0 0 0 .5px rgba(0,0,0,.10),0 1px 2px rgba(0,0,0,.25),0 4px 11px rgba(0,0,0,.22);"></div>
<div style="letter-spacing:-0.226px;margin-left:0.00px;position:absolute;left:654.1999999999999px;top:562.97px;font-family:'Liberation Sans', sans-serif;font-size:10.2px;font-weight:400;color:#26262a;line-height:14px;white-space:nowrap;-webkit-text-stroke:.2px #26262a;">SOFT DELIVERY OBLIGATION</div>
<svg style="position:absolute;left:858.8px;top:553.6px;overflow:visible;" width="36" height="14" viewBox="0 0 36 14" fill="none"><path d="M1.8 6.5 H10.6" stroke="#3a3a3e" stroke-width="1"/><path d="M23.0 1.9 L31.0 9.9 M31.0 1.9 L23.0 9.9" stroke="#3a3a3e" stroke-width="1"/></svg>
<div style="letter-spacing:0.066px;margin-left:0.00px;position:absolute;left:654.1999999999999px;top:585.93px;font-family:'Liberation Sans', sans-serif;font-size:12.9px;font-weight:400;color:#3c3c42;line-height:18px;white-space:nowrap;">"Commercially reasonable efforts" is</div>
<div style="letter-spacing:-0.089px;margin-left:0.00px;position:absolute;left:654.1999999999999px;top:602.78px;font-family:'Liberation Sans', sans-serif;font-size:12.9px;font-weight:400;color:#3c3c42;line-height:18px;white-space:nowrap;">too weak. Replace with a clear delivery</div>
<div style="letter-spacing:0.077px;margin-left:0.00px;position:absolute;left:654.1999999999999px;top:619.63px;font-family:'Liberation Sans', sans-serif;font-size:12.9px;font-weight:400;color:#3c3c42;line-height:18px;white-space:nowrap;">obligation, milestone deadlines, and</div>
<div style="letter-spacing:0.059px;margin-left:0.00px;position:absolute;left:654.1999999999999px;top:636.48px;font-family:'Liberation Sans', sans-serif;font-size:12.9px;font-weight:400;color:#3c3c42;line-height:18px;white-space:nowrap;">consequences for delay.</div>
<svg style="position:absolute;left:654.0px;top:663.0px;overflow:visible;" width="12" height="9" viewBox="0 0 12 9" fill="none"><path d="M5.8 1.6 V8.0 M.6 1.2 H4.3 Q5.8 1.2 5.8 2.2 Q5.8 1.2 7.3 1.2 H11 V7.6 H7.3 Q5.8 7.6 5.8 8.3 Q5.8 7.6 4.3 7.6 H.6Z M7.6 3.1 H9.6 M7.6 4.6 H9.6 M7.6 6.1 H9.6" stroke="#909096" stroke-width=".8"/></svg>
<div style="letter-spacing:-0.183px;margin-left:0.00px;position:absolute;left:669.8px;top:662.36px;font-family:'Liberation Sans', sans-serif;font-size:8.2px;font-weight:400;color:#909096;line-height:11px;white-space:nowrap;">AI-AGENT TIP</div>
<div style="position:absolute;left:1263.8px;top:762.9px;width:245.4px;height:98.8px;background:linear-gradient(90deg,rgba(255,255,255,.97) 0%,rgba(255,255,255,.88) 45%,rgba(255,255,255,.80) 75%,rgba(255,255,255,.78) 100%);border-radius:10px;-webkit-backdrop-filter:blur(1.7px);backdrop-filter:blur(1.7px);box-shadow:0 0 0 .5px rgba(0,0,0,.12),0 1px 2px rgba(0,0,0,.28),0 5px 14px rgba(0,0,0,.22);"></div>
<svg style="position:absolute;left:1283px;top:777.6px;overflow:visible;" width="20" height="18" viewBox="0 0 20 18" fill="none"><path d="M9.5 2.8 L17.2 15.9 H1.8 Z" fill="#a3161b" stroke="#a3161b" stroke-width="1.2" stroke-linejoin="round"/><path d="M9.5 7.4 V11.5" stroke="#fff" stroke-width="1.35"/><circle cx="9.5" cy="13.7" r=".8" fill="#fff"/></svg>
<div style="letter-spacing:-0.104px;margin-left:0.00px;position:absolute;left:1311.6px;top:778.84px;font-family:'Liberation Sans', sans-serif;font-size:12px;font-weight:400;color:#161618;line-height:17px;white-space:nowrap;-webkit-text-stroke:.3px #161618;">RED FLAG MATCH</div>
<svg style="position:absolute;left:1466px;top:770px;overflow:visible;" width="36" height="14" viewBox="0 0 36 14" fill="none"><path d="M1.7 7.2 H11.7" stroke="#3a3a3e" stroke-width="1"/><path d="M23.3 2.4 L31.7 10.8 M31.7 2.4 L23.3 10.8" stroke="#3a3a3e" stroke-width="1"/></svg>
<div style="letter-spacing:-0.003px;margin-left:-1.00px;position:absolute;left:1283.8px;top:804.76px;font-family:'Liberation Sans', sans-serif;font-size:15.4px;font-weight:400;color:#222226;line-height:22px;white-space:nowrap;">Liability Multiplier</div>
<div style="letter-spacing:-0.071px;margin-left:0.00px;position:absolute;left:1283.8px;top:829.54px;font-family:'Liberation Sans', sans-serif;font-size:12px;font-weight:400;color:#6a6a70;line-height:17px;white-space:nowrap;">88% Similarity</div>
<div style="letter-spacing:-0.391px;margin-left:0.00px;position:absolute;left:1401.8px;top:829.54px;font-family:'Liberation Sans', sans-serif;font-size:12px;font-weight:400;color:#8a8a90;line-height:17px;white-space:nowrap;">Ref:</div>
<div style="letter-spacing:-0.270px;margin-left:0.00px;position:absolute;left:1426.2px;top:829.54px;font-family:'Liberation Sans', sans-serif;font-size:12px;font-weight:400;color:#1c46c8;line-height:17px;white-space:nowrap;text-decoration:underline;text-underline-offset:2px;text-decoration-thickness:1px;">Playbook v2</div>
<!-- p_agent -->
<div style="position:absolute;left:64px;top:395px;width:405.3px;height:604px;background:#fff;border-radius:12px;box-shadow:0 0 0 .5px rgba(0,0,0,.10),0 1px 4px rgba(0,0,0,.28),0 5px 16px rgba(0,0,0,.40);"></div>
<div style="position:absolute;left:64px;top:395px;width:405.3px;height:61.6px;background:#03163a;border-radius:12px 12px 0 0;"></div>
<svg style="position:absolute;left:83px;top:414.5px;overflow:visible;" width="17" height="23" viewBox="0 0 17 23" fill="none"><rect x="1.7" y="1.6" width="12.6" height="19" rx="1.6" stroke="#e9eaff" stroke-width="1.5"/><path d="M4.9 11.3 L7.0 13.3 L10.8 8.7" stroke="#e9eaff" stroke-width="1.5"/><path d="M14.9 6.2 V9.0" stroke="#e9eaff" stroke-width="1.1"/></svg>
<div style="letter-spacing:0.563px;margin-left:-1.00px;position:absolute;left:108px;top:415.92px;font-family:'Liberation Sans', sans-serif;font-size:13.8px;font-weight:400;color:#fff;line-height:19px;white-space:nowrap;">LEGAL AI AGENT</div>
<svg style="position:absolute;left:435px;top:419px;overflow:visible;" width="16" height="15" viewBox="0 0 16 15" fill="none"><path d="M1.3 1.3 L13.7 12.9 M13.7 1.3 L1.3 12.9" stroke="#d3d6ea" stroke-width="1.3"/></svg>
<div style="position:absolute;left:84.2px;top:477px;width:364.8px;height:104.6px;background:#f6f2ef;"></div>
<div style="letter-spacing:0.218px;margin-left:-1.00px;position:absolute;left:99.6px;top:493.80px;font-family:'Liberation Sans', sans-serif;font-size:15.3px;font-weight:400;color:#2b2b30;line-height:21px;white-space:nowrap;">I've analyzed the Indemnification section. It</div>
<div style="letter-spacing:0.131px;margin-left:0.00px;position:absolute;left:99.6px;top:518.80px;font-family:'Liberation Sans', sans-serif;font-size:15.3px;font-weight:400;color:#2b2b30;line-height:21px;white-space:nowrap;">deviates from your standard playbook by 42%.</div>
<div style="letter-spacing:0.073px;margin-left:0.00px;position:absolute;left:99.6px;top:543.50px;font-family:'Liberation Sans', sans-serif;font-size:15.3px;font-weight:400;color:#2b2b30;line-height:21px;white-space:nowrap;">Would you like me to rewrite it?</div>
<div style="position:absolute;left:84.2px;top:590px;width:146.6px;height:27.6px;background:#f5f5f6;"></div>
<div style="letter-spacing:0.324px;margin-left:0.00px;position:absolute;left:94.9px;top:595.55px;font-family:'Liberation Sans', sans-serif;font-size:11.7px;font-weight:400;color:#222228;line-height:16px;white-space:nowrap;-webkit-text-stroke:.25px #222228;">SUMMARIZE CLAUSE</div>
<div style="position:absolute;left:241.2px;top:590px;width:102.7px;height:27.6px;background:#f5f5f6;"></div>
<div style="letter-spacing:0.064px;margin-left:0.00px;position:absolute;left:251.8px;top:595.55px;font-family:'Liberation Sans', sans-serif;font-size:11.7px;font-weight:400;color:#222228;line-height:16px;white-space:nowrap;-webkit-text-stroke:.25px #222228;">EXPLAIN RISK</div>
<div style="position:absolute;left:354px;top:590px;width:74.4px;height:27.6px;background:#f5f5f6;"></div>
<div style="letter-spacing:0.034px;margin-left:0.00px;position:absolute;left:364px;top:595.55px;font-family:'Liberation Sans', sans-serif;font-size:11.7px;font-weight:400;color:#222228;line-height:16px;white-space:nowrap;-webkit-text-stroke:.25px #222228;">REWRITE</div>
<div style="position:absolute;left:124.8px;top:627.8px;width:324.2px;height:105.2px;background:#eaeffb;"></div>
<div style="letter-spacing:0.196px;margin-left:-1.00px;position:absolute;left:140px;top:645.00px;font-family:'Liberation Sans', sans-serif;font-size:15.3px;font-weight:400;color:#2b2b30;line-height:21px;white-space:nowrap;">No need</div>
<div style="letter-spacing:0.163px;margin-left:0.00px;position:absolute;left:140px;top:670.20px;font-family:'Liberation Sans', sans-serif;font-size:15.3px;font-weight:400;color:#2b2b30;line-height:21px;white-space:nowrap;">Analyze and highlight the weaknesses of</div>
<div style="letter-spacing:0.342px;margin-left:0.00px;position:absolute;left:140px;top:694.40px;font-family:'Liberation Sans', sans-serif;font-size:15.3px;font-weight:400;color:#2b2b30;line-height:21px;white-space:nowrap;">the agreement</div>
<div style="position:absolute;left:84.2px;top:743.3px;width:339.2px;height:154.5px;background:#f6f2ef;"></div>
<div style="letter-spacing:0.186px;margin-left:-1.00px;position:absolute;left:99.6px;top:760.40px;font-family:'Liberation Sans', sans-serif;font-size:15.3px;font-weight:400;color:#2b2b30;line-height:21px;white-space:nowrap;">I've completed the review and added</div>
<div style="letter-spacing:0.301px;margin-left:0.00px;position:absolute;left:99.6px;top:785.40px;font-family:'Liberation Sans', sans-serif;font-size:15.3px;font-weight:400;color:#2b2b30;line-height:21px;white-space:nowrap;">annotations directly to the document. Key</div>
<div style="letter-spacing:0.006px;margin-left:-1.00px;position:absolute;left:99.6px;top:809.80px;font-family:'Liberation Sans', sans-serif;font-size:15.3px;font-weight:400;color:#2b2b30;line-height:21px;white-space:nowrap;">risk areas, vague clauses, and legally weak</div>
<div style="letter-spacing:0.129px;margin-left:0.00px;position:absolute;left:99.6px;top:834.50px;font-family:'Liberation Sans', sans-serif;font-size:15.3px;font-weight:400;color:#2b2b30;line-height:21px;white-space:nowrap;">sections have been marked for easier</div>
<div style="letter-spacing:0.411px;margin-left:-1.00px;position:absolute;left:99.6px;top:859.10px;font-family:'Liberation Sans', sans-serif;font-size:15.3px;font-weight:400;color:#2b2b30;line-height:21px;white-space:nowrap;">revision.</div>
<div style="position:absolute;left:64px;top:917.6px;width:405.3px;height:1px;background:#f1f1f3;"></div>
<div style="position:absolute;left:84.2px;top:940.4px;width:364.8px;height:38.2px;background:#fafafa;"></div>
<div style="letter-spacing:0.212px;margin-left:0.00px;position:absolute;left:99.6px;top:949.00px;font-family:'Liberation Sans', sans-serif;font-size:15.3px;font-weight:400;color:#6b6b72;line-height:21px;white-space:nowrap;">Ask assistant...</div>
</div>
</body></html>
